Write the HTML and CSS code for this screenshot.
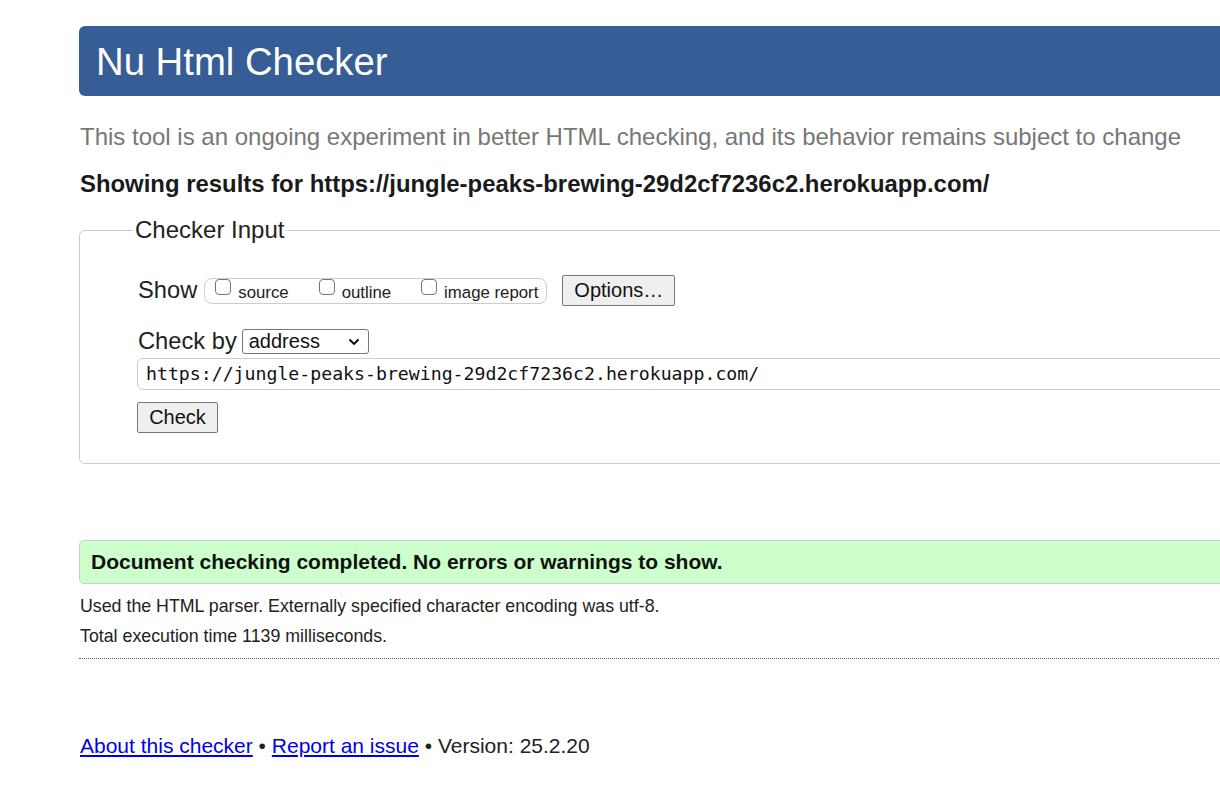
FILE: index.html
```html
<!DOCTYPE html>
<html>
<head>
<meta charset="utf-8">
<title>Nu Html Checker</title>
<link rel="stylesheet" href="styles.css">
</head>
<body>
<div class="page">
  <h1 class="title">Nu Html Checker</h1>
  <p class="intro">This tool is an ongoing experiment in better HTML checking, and its behavior remains subject to change</p>
  <p class="showing">Showing results for https://jungle-peaks-brewing-29d2cf7236c2.herokuapp.com/</p>
  <fieldset class="input-box">
    <legend class="legend">Checker Input</legend>
    <div class="row show-row">
      <span class="label">Show</span>
      <span class="checks">
        <label class="check"><span class="cb"></span>source</label>
        <label class="check"><span class="cb"></span>outline</label>
        <label class="check"><span class="cb"></span>image report</label>
      </span>
      <button class="btn options">Options…</button>
    </div>
    <div class="row by-row">
      <span class="label label-by">Check by</span>
      <span class="select">address
        <svg class="chev" width="12" height="8" viewBox="0 0 12 8"><path d="M1.5 1.5 L6 6 L10.5 1.5" fill="none" stroke="#000" stroke-width="1.8"/></svg>
      </span>
    </div>
    <div class="url">https://jungle-peaks-brewing-29d2cf7236c2.herokuapp.com/</div>
    <button class="btn check-btn">Check</button>
  </fieldset>
  <div class="success">Document checking completed. No errors or warnings to show.</div>
  <p class="info">Used the HTML parser. Externally specified character encoding was utf-8.</p>
  <p class="info">Total execution time 1139 milliseconds.</p>
  <hr class="sep">
  <p class="footer"><a href="#">About this checker</a> • <a href="#">Report an issue</a> • Version: 25.2.20</p>
</div>
</body>
</html>
```
FILE: styles.css
```css
html, body {
  margin: 0;
  padding: 0;
  background: #fff;
  overflow: hidden;
}
body {
  font-family: "Liberation Sans", Arial, sans-serif;
  color: #222;
  width: 1220px;
  height: 789px;
}
.page {
  margin-left: 79px;
  width: 1300px;
  padding-top: 26px;
}
.title {
  margin: 0;
  height: 70px;
  box-sizing: border-box;
  background: #365d95;
  color: #fff;
  font-weight: normal;
  font-size: 38.3px;
  line-height: 72px;
  padding-left: 17px;
  border-radius: 6px;
}
.intro {
  margin: 27px 0 0 1px;
  color: #777;
  font-size: 24px;
  line-height: 28px;
}
.showing {
  margin: 19px 0 0 1px;
  font-weight: bold;
  font-size: 23.9px;
  line-height: 28px;
  color: #1a1a1a;
}
.input-box {
  margin: 18px 0 0 0;
  border: 1px solid #ccc;
  border-radius: 6px;
  padding: 8px 0 30px 57px;
  box-sizing: border-box;
}
.legend {
  font-size: 24px;
  line-height: 28px;
  padding: 0 2px;
  margin-left: -4px;
  color: #222;
}
.row {
  display: flex;
  align-items: center;
}
.show-row {
  margin-top: 23px;
}
.label {
  font-size: 23.7px;
  margin-left: 1px;
  margin-right: 7px;
}
.label-by {
  margin-right: 5px;
}
.checks {
  display: flex;
  align-items: center;
  border: 1px solid #ccc;
  border-radius: 8px;
  height: 26px;
  box-sizing: border-box;
  padding: 0 8px 0 10px;
  gap: 30px;
  font-size: 16.8px;
  color: #222;
}
.check {
  display: flex;
  align-items: center;
  position: relative;
  top: 2px;
}
.cb {
  width: 16px;
  height: 16px;
  border: 1px solid #767676;
  border-radius: 4px;
  box-sizing: border-box;
  margin-right: 7px;
  position: relative;
  top: -6px;
  background: #fff;
}
.btn {
  font-family: "Liberation Sans", Arial, sans-serif;
  font-size: 20px;
  background: #efefef;
  border: 1px solid #767676;
  border-radius: 2px;
  color: #111;
  padding: 0;
  height: 31px;
}
.options {
  margin-left: 15px;
  width: 113px;
}
.by-row {
  margin-top: 22px;
}
.select {
  display: inline-flex;
  align-items: center;
  justify-content: space-between;
  width: 127px;
  height: 25px;
  box-sizing: border-box;
  border: 1px solid #767676;
  border-radius: 3px;
  padding: 0 8px 0 6px;
  font-size: 20px;
  color: #111;
}
.url {
  margin-top: 3px;
  height: 32px;
  box-sizing: border-box;
  border: 1px solid #ccc;
  border-radius: 6px;
  font-family: "DejaVu Sans Mono", monospace;
  font-size: 18.2px;
  line-height: 30px;
  padding-left: 8px;
  color: #111;
}
.check-btn {
  margin-top: 12px;
  width: 81px;
}
.success {
  margin-top: 76px;
  height: 44px;
  box-sizing: border-box;
  background: #ccffcc;
  border: 1px solid #cccccc;
  border-radius: 5px;
  font-weight: bold;
  font-size: 21px;
  line-height: 42px;
  padding-left: 11px;
  color: #111;
}
.info {
  margin: 0;
  font-size: 17.8px;
  line-height: 30px;
  padding-left: 1px;
}
.success + .info {
  margin-top: 7px;
}
.sep {
  margin: 7px 0 0 0;
  border: 0;
  border-top: 1px dotted #666;
  height: 0;
}
.footer {
  margin: 74px 0 0 1px;
  font-size: 21px;
  line-height: 26px;
  color: #222;
}
.footer a {
  color: #0000ee;
  text-decoration: underline;
}
```
